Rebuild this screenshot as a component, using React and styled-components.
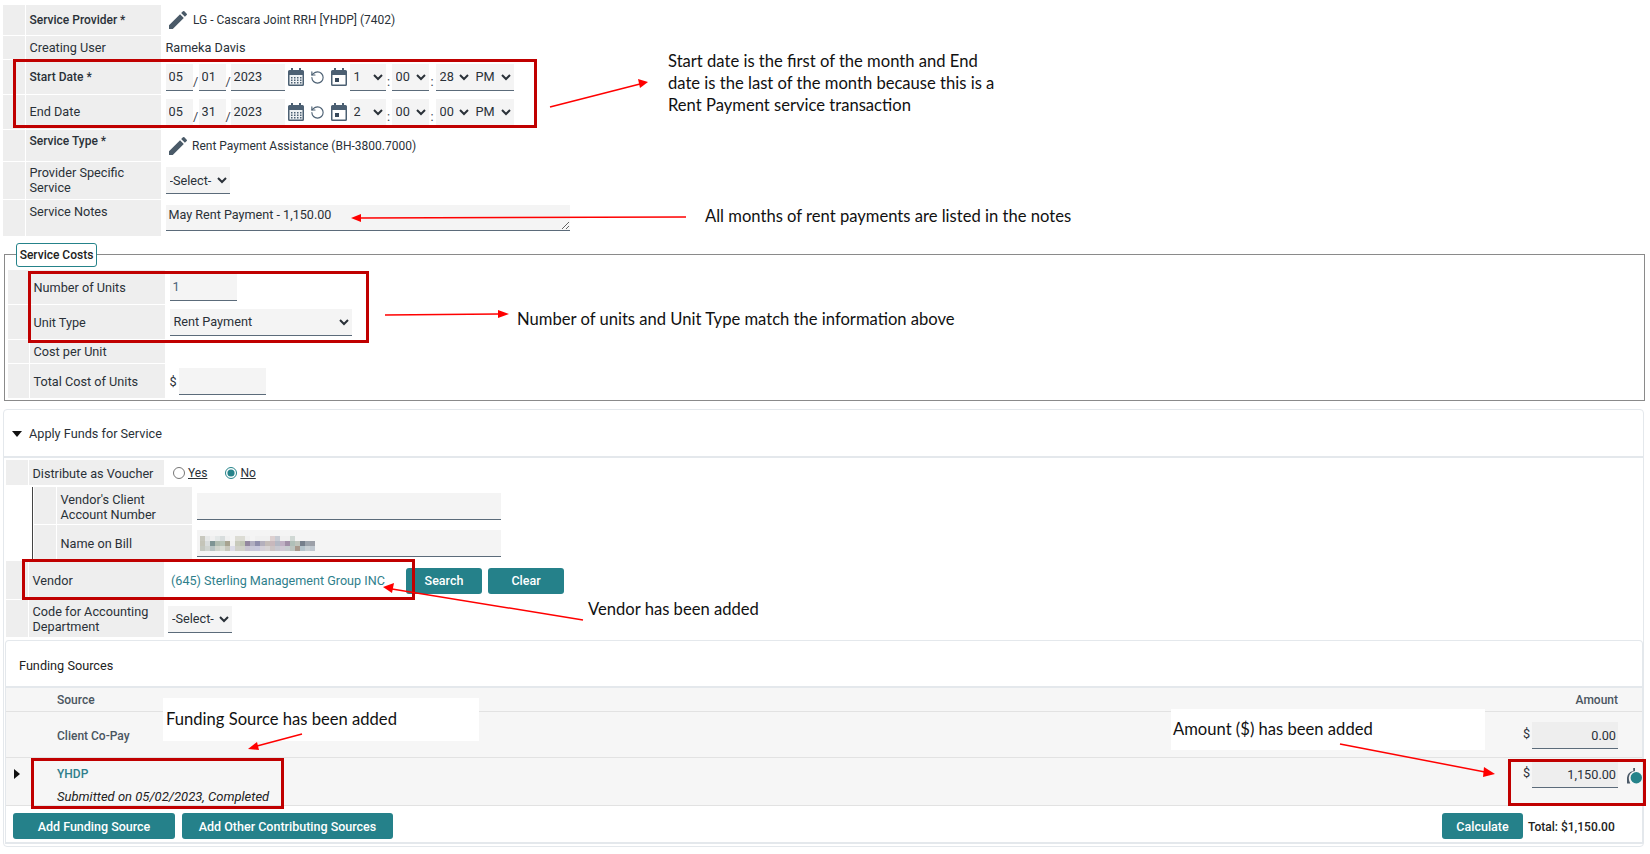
import React from "react";
import styled, { createGlobalStyle } from "styled-components";
import { RotateCcw } from "lucide-react";

const Global = createGlobalStyle`
  html, body { margin: 0; padding: 0; background: #fff; }
  body { font-family: Roboto, "Liberation Sans", sans-serif; font-size: 12.7px; color: #212b36; }
  * { box-sizing: border-box; }
`;

const Page = styled.div`
  position: relative;
  width: 1650px;
  height: 854px;
  overflow: hidden;
  padding-top: 5px;
`;

const TopForm = styled.div`
  display: flex;
  flex-direction: column;
  gap: 1px;
  margin-left: 3px;
`;

const Row = styled.div`
  display: grid;
  grid-template-columns: ${(p) => p.$indent || 22}px 135px 1fr;
  column-gap: 1px;
  height: ${(p) => p.$h}px;
`;

const Indent = styled.div`
  background: #eee;
`;

const Label = styled.div`
  background: #eee;
  padding: ${(p) => (p.$top ? `${p.$top}px` : "0")} 0 ${(p) => p.$lift || 0}px 3.5px;
  display: flex;
  align-items: ${(p) => (p.$top ? "flex-start" : "center")};
  line-height: 15px;
  font-size: ${(p) => (p.$bold ? 12 : 12.7)}px;
  font-weight: ${(p) => (p.$bold ? 500 : 400)};
  color: #2a3138;
`;

const Value = styled.div`
  display: flex;
  align-items: ${(p) => (p.$top ? "flex-start" : "center")};
  padding: ${(p) => p.$top || 0}px 0 0 ${(p) => p.$pad ?? 3.5}px;
  min-width: 0;
`;

const Field = styled.input`
  height: 27px;
  width: ${(p) => p.$w}px;
  flex: none;
  border: 0;
  border-bottom: 1px solid #5b6b7a;
  border-radius: 0;
  background: ${(p) => (p.$right ? "#eee" : "#f4f4f4")};
  padding: 0 ${(p) => (p.$right ? 2 : 3)}px 0 3px;
  font: 400 12.7px Roboto, sans-serif;
  color: ${(p) => p.$color || "#2a3138"};
  text-align: ${(p) => (p.$right ? "right" : "left")};
  outline: none;
`;

const Pick = styled.select`
  height: 27px;
  width: ${(p) => p.$w}px;
  flex: none;
  border: 0;
  border-bottom: 1px solid #5b6b7a;
  border-radius: 0;
  background-color: #f4f4f4;
  padding: 0;
  font: 400 12.7px Roboto, sans-serif;
  color: #2a3138;
  outline: none;
`;

const Notes = styled.textarea`
  width: 404px;
  height: 26px;
  margin-top: 4px;
  border: 0;
  border-bottom: 1px solid #5b6b7a;
  border-radius: 0;
  background: #f4f4f4;
  padding: 2px 3px;
  font: 400 12.6px/15px Roboto, sans-serif;
  color: #2a3138;
  outline: none;
  display: block;
`;

const Plain = styled.span`
  margin-left: ${(p) => p.$ml || 0}px;
  font-size: ${(p) => p.$size || 12.7}px;
  color: ${(p) => p.$color || "#2a3138"};
  white-space: nowrap;
`;

const Slash = styled.span`
  width: ${(p) => p.$w}px;
  flex: none;
  text-align: center;
  padding-top: 8px;
  color: #3c4650;
`;

const DateIcons = styled.span`
  display: inline-flex;
  align-items: center;
  flex: none;
  height: 27px;
  margin: 0 3px 0 3px;
  gap: 6px;
  color: #4c6073;
`;

const FieldSet = styled.div`
  position: relative;
  margin: 18px 0 0 4px;
  width: 1641px;
  height: 147px;
  border: 1px solid #8a8a8a;
  padding: 15px 0 0 3px;
  display: flex;
  flex-direction: column;
  gap: 1px;
`;

const Legend = styled.div`
  position: absolute;
  left: 11px;
  top: -12px;
  width: 81px;
  height: 24px;
  display: flex;
  align-items: center;
  justify-content: center;
  background: #fff;
  border: 1px solid #25838a;
  border-radius: 3px;
  font-size: 12px;
  font-weight: 500;
  color: #222;
`;

const Panel = styled.div`
  margin: 8px 0 0 3px;
  width: 1641px;
  height: 438px;
  border: 1px solid #e4e8ec;
  border-radius: 4px;
`;

const PanelHead = styled.div`
  height: 48px;
  display: flex;
  align-items: center;
  padding: 1px 0 0 8px;
  border-bottom: 2px solid #e4e8ec;
  gap: 7px;
  color: #2a3138;
`;

const DownCaret = styled.span`
  width: 0;
  height: 0;
  border-left: 5px solid transparent;
  border-right: 5px solid transparent;
  border-top: 6px solid #111;
`;

const PanelBody = styled.div`
  display: flex;
  flex-direction: column;
  gap: 1px;
  padding: 2px 0 0 2px;
  ${Label} { padding-top: 2px; }
  ${Value} { padding-top: 1px; }
`;

const RadioRow = styled.label`
  display: inline-flex;
  align-items: center;
  gap: 3px;
  margin-right: 18px;
  font-size: 12px;
  text-decoration: underline;
  color: #2a3138;
`;

const Radio = styled.input`
  width: 12px;
  height: 12px;
  margin: 0;
  accent-color: #25838a;
`;

const Nested = styled.div`
  margin: 1px 0 0 26px;
  border-left: 1px solid #444;
  padding-left: 1px;
  display: flex;
  flex-direction: column;
  gap: 1px;
`;

const MaskedField = styled.div`
  position: relative;
  width: 304px;
  height: 27px;
  background: #f4f4f4;
  border-bottom: 1px solid #5b6b7a;
`;

const Mosaic = styled.svg`
  position: absolute;
  left: 3px;
  top: 6px;
`;

const VendorLink = styled.a`
  color: #2f7f8c;
  font-size: 12.6px;
  width: 215px;
  margin-right: 20px;
  white-space: nowrap;
`;

const Btn = styled.button`
  height: 26px;
  width: ${(p) => p.$w}px;
  flex: none;
  margin-right: ${(p) => p.$mr || 0}px;
  margin-left: ${(p) => p.$ml || 0};
  border: 0;
  border-radius: 3px;
  background: #25818a;
  color: #fff;
  font: 500 12.5px Roboto, sans-serif;
  padding: 0;
`;

const Funding = styled.div`
  margin: 2px 0 0 -1px;
  height: 204px;
  border: 1px solid #e4e8ec;
  border-bottom-width: 2px;
  border-radius: 4px 4px 0 0;
`;

const FundingHead = styled.div`
  height: 47px;
  padding: 4px 0 0 13px;
  display: flex;
  align-items: center;
  border-bottom: 2px solid #e4e8ec;
  color: #222;
`;

const TableRow = styled.div`
  display: grid;
  grid-template-columns: 51px 1fr 120px;
  height: ${(p) => p.$h}px;
  background: #f6f6f6;
  border-bottom: 1px solid #e2e2e2;
`;

const Toggle = styled.div`
  padding: 11px 0 0 8px;
`;

const RightCaret = styled.span`
  display: block;
  width: 0;
  height: 0;
  border-top: 5px solid transparent;
  border-bottom: 5px solid transparent;
  border-left: 6px solid #111;
`;

const HeadText = styled.div`
  display: flex;
  align-items: center;
  justify-content: ${(p) => (p.$right ? "flex-end" : "flex-start")};
  padding-right: ${(p) => (p.$right ? 24 : 0)}px;
  font-size: 12px;
  font-weight: 500;
  color: #4a5560;
`;

const SourceName = styled.div`
  display: flex;
  align-items: center;
  padding-top: 2px;
  font-size: 12px;
  font-weight: 500;
  color: #4a5560;
`;

const SourceBlock = styled.div`
  padding-top: 9px;
  line-height: 14px;
`;

const SourceLink = styled.div`
  font-size: 12px;
  font-weight: 500;
  color: #2f7f8c;
`;

const Submitted = styled.div`
  margin-top: 9px;
  font-size: 13px;
  font-style: italic;
  color: #222;
`;

const AmountCell = styled.div`
  display: flex;
  align-items: flex-start;
  padding-top: ${(p) => p.$top}px;
`;

const Dollar = styled.span`
  width: 10px;
  flex: none;
  padding: 5px 0 0 1px;
  line-height: 14px;
  color: #2a3138;
`;

const Footer = styled.div`
  height: 38px;
  display: flex;
  align-items: flex-start;
  padding: 7px 30px 0 7px;
  gap: 7px;
`;

const Total = styled.span`
  width: 84px;
  margin-left: -2px;
  padding-top: 7px;
  font-size: 12px;
  font-weight: 500;
  color: #222;
  white-space: nowrap;
`;

const RedBox = styled.div`
  position: absolute;
  left: ${(p) => p.$x}px;
  top: ${(p) => p.$y}px;
  width: ${(p) => p.$w}px;
  height: ${(p) => p.$h}px;
  border: 3px solid #c00000;
`;

const Callout = styled.div`
  position: absolute;
  left: ${(p) => p.$x}px;
  top: ${(p) => p.$y}px;
  font: 400 16.6px/22px Lato, "Open Sans", sans-serif;
  color: #111;
  white-space: nowrap;
`;

const WhitePatch = styled.div`
  position: absolute;
  left: ${(p) => p.$x}px;
  top: ${(p) => p.$y}px;
  width: ${(p) => p.$w}px;
  height: ${(p) => p.$h}px;
  background: #fff;
`;

const ArrowLayer = styled.svg`
  position: absolute;
  left: 0;
  top: 0;
  pointer-events: none;
`;

const Pencil = () => (
  <svg width="24" height="24" viewBox="0 0 24 24" fill="#4a5a68" style={{ flex: "none" }}>
    <path d="M3 17.25V21h3.75L17.81 9.94l-3.75-3.75L3 17.25zM20.71 7.04a1 1 0 0 0 0-1.41l-2.34-2.34a1 1 0 0 0-1.41 0l-1.83 1.83 3.75 3.75 1.83-1.83z" />
  </svg>
);

const CalendarGrid = () => (
  <svg width="16" height="18" viewBox="0 0 16 18" style={{ flex: "none" }}>
    <path fill="#4c6073" d="M3 0h2v2h6V0h2v2h1.5A1.5 1.5 0 0 1 16 3.5v13a1.5 1.5 0 0 1-1.5 1.5h-13A1.5 1.5 0 0 1 0 16.5v-13A1.5 1.5 0 0 1 1.500 2H3z" />
    <rect x="1.500" y="7" width="13" height="9.500" fill="#eef1f3" />
    {[3, 6, 9, 12].map((x) =>
      [9, 11.5, 14].map((y) => <rect key={`${x}-${y}`} x={x} y={y} width="1.500" height="1.500" fill="#4c6073" />)
    )}
  </svg>
);

const CalendarDay = () => (
  <svg width="16" height="18" viewBox="0 0 16 18" style={{ flex: "none" }}>
    <path fill="#4c6073" d="M3 0h2v2h6V0h2v2h1.500A1.500 1.500 0 0 1 16 3.500v13a1.500 1.500 0 0 1-1.500 1.500h-13A1.500 1.500 0 0 1 0 16.500v-13A1.500 1.500 0 0 1 1.500 2H3z" />
    <rect x="1.500" y="7" width="13" height="9.500" fill="#fff" />
    <rect x="4" y="10" width="4" height="4" fill="#37485a" />
  </svg>
);

const DateTime = ({ m, d, y, hour, min, sec }) => (
  <>
    <Field $w={27} defaultValue={m} />
    <Slash $w={6}>/</Slash>
    <Field $w={27} defaultValue={d} />
    <Slash $w={5}>/</Slash>
    <Field $w={54} defaultValue={y} />
    <DateIcons>
      <CalendarGrid />
      <RotateCcw size={15} strokeWidth={1.8} />
      <CalendarDay />
    </DateIcons>
    <Pick $w={36} defaultValue={hour}><option>{hour}</option></Pick>
    <Slash $w={6}>:</Slash>
    <Pick $w={37} defaultValue={min}><option>{min}</option></Pick>
    <Slash $w={7}>:</Slash>
    <Pick $w={36} defaultValue={sec}><option>{sec}</option></Pick>
    <Pick $w={42} defaultValue="PM"><option>PM</option></Pick>
  </>
);

const mosaic = [
  ["c8c8be", "e6e8e8", "f0f0f0", "e4e8e8", "d8dddd", "f0f0f0", "f4f4f4", "dcdcd4", "dcdcd4", "f0f0f0", "f4f4f4", "f0f0f0", "f0f0f0", "f0f0f0", "ddd0d0", "c8ccd4", "f0f0f0", "f0f0f0", "d0d8d4", "f4f4f4", "f4f4f4", "f4f4f4", "f4f4f4"],
  ["c4c4b8", "d8dcdc", "7e9494", "b0bcb0", "b8c4b8", "a8a490", "f0f0f0", "c8cabc", "c0c4b4", "93879f", "b0aec0", "8f8eac", "b4b0bc", "c4bcb8", "c8b8bc", "b4b8c4", "c0b0c4", "a28fa8", "b0bfb8", "bfc4bc", "76808c", "9ca4ac", "9ca0a8"],
  ["c4c8c0", "d0d4d0", "b8c4c4", "d0d4cc", "d8dcd4", "c8c8bc", "dcdce8", "d0d0c8", "d0d0c8", "c8c4d0", "c8c8d8", "c8c8dc", "d4d0d8", "d8d4d4", "ccc4c4", "c8c8d0", "d0c8d4", "c8ccd0", "bcc4c0", "a8988c", "b4c4cc", "c8d0d4", "c0c8d0"],
];

const Blurred = () => (
  <Mosaic width="115" height="15" viewBox="0 0 115 15" shapeRendering="crispEdges">
    {mosaic.map((row, r) =>
      row.map((c, i) => <rect key={`${r}-${i}`} x={i * 5} y={r * 5} width="5" height="5" fill={`#${c}`} />)
    )}
  </Mosaic>
);

const arrows = [
  { d: "M550 107 L640 84", tip: "648,82 638,79 640,88" },
  { d: "M686 217 L360 218", tip: "351,218 361,214 361,222" },
  { d: "M385 315 L498 314", tip: "509,314 498,310 498,318" },
  { d: "M583 620 L392 589", tip: "383,587 394,583 392,593" },
  { d: "M302 734 L257 746", tip: "248,749 257,742 259,750" },
  { d: "M1340 744 L1485 772", tip: "1495,774 1484,767 1483,777" },
];

export default function App() {
  return (
    <Page>
      <Global />
      <TopForm>
        <Row $h={30}>
          <Indent />
          <Label $bold>Service Provider *</Label>
          <Value $pad={4}>
            <Pencil />
            <Plain $ml={3} $size={12}>LG - Cascara Joint RRH [YHDP] (7402)</Plain>
          </Value>
        </Row>
        <Row $h={23}>
          <Indent />
          <Label>Creating User</Label>
          <Value><Plain>Rameka Davis</Plain></Value>
        </Row>
        <Row $h={34}>
          <Indent />
          <Label $bold>Start Date *</Label>
          <Value><DateTime m="05" d="01" y="2023" hour="1" min="00" sec="28" /></Value>
        </Row>
        <Row $h={34}>
          <Indent />
          <Label $lift={2}>End Date</Label>
          <Value><DateTime m="05" d="31" y="2023" hour="2" min="00" sec="00" /></Value>
        </Row>
        <Row $h={31}>
          <Indent />
          <Label $bold $top={4}>Service Type *</Label>
          <Value $pad={4}>
            <Pencil />
            <Plain $ml={2} $size={12}>Rent Payment Assistance (BH-3800.7000)</Plain>
          </Value>
        </Row>
        <Row $h={37}>
          <Indent />
          <Label $lift={2}>Provider Specific<br />Service</Label>
          <Value><Pick $w={64} defaultValue="-Select-"><option>-Select-</option></Pick></Value>
        </Row>
        <Row $h={36}>
          <Indent />
          <Label $top={4}>Service Notes</Label>
          <Value $top={1}><Notes defaultValue="May Rent Payment - 1,150.00" /></Value>
        </Row>
      </TopForm>

      <FieldSet>
        <Legend>Service Costs</Legend>
        <Row $h={34} $indent={21}>
          <Indent />
          <Label>Number of Units</Label>
          <Value><Field $w={67} $color="#4a6378" defaultValue="1" /></Value>
        </Row>
        <Row $h={34} $indent={21}>
          <Indent />
          <Label>Unit Type</Label>
          <Value><Pick $w={182} defaultValue="Rent Payment"><option>Rent Payment</option></Pick></Value>
        </Row>
        <Row $h={23} $indent={21}>
          <Indent />
          <Label>Cost per Unit</Label>
          <Value />
        </Row>
        <Row $h={34} $indent={21}>
          <Indent />
          <Label>Total Cost of Units</Label>
          <Value>
            <Plain>$</Plain>
            <Field $w={87} style={{ marginLeft: 2 }} />
          </Value>
        </Row>
      </FieldSet>

      <Panel>
        <PanelHead>
          <DownCaret />
          Apply Funds for Service
        </PanelHead>
        <PanelBody>
          <Row $h={25}>
            <Indent />
            <Label>Distribute as Voucher</Label>
            <Value $pad={8}>
              <RadioRow><Radio type="radio" name="voucher" />Yes</RadioRow>
              <RadioRow><Radio type="radio" name="voucher" defaultChecked />No</RadioRow>
            </Value>
          </Row>
          <Nested>
            <Row $h={37}>
              <Indent />
              <Label>Vendor's Client<br />Account Number</Label>
              <Value><Field $w={304} /></Value>
            </Row>
            <Row $h={35}>
              <Indent />
              <Label>Name on Bill</Label>
              <Value>
                <MaskedField><Blurred /></MaskedField>
              </Value>
            </Row>
          </Nested>
          <Row $h={38}>
            <Indent />
            <Label $lift={2}>Vendor</Label>
            <Value $pad={6}>
              <VendorLink>(645) Sterling Management Group INC</VendorLink>
              <Btn $w={76} $mr={6}>Search</Btn>
              <Btn $w={76}>Clear</Btn>
            </Value>
          </Row>
          <Row $h={37}>
            <Indent />
            <Label $lift={2}>Code for Accounting<br />Department</Label>
            <Value $pad={3}><Pick $w={64} defaultValue="-Select-"><option>-Select-</option></Pick></Value>
          </Row>
          <Funding>
            <FundingHead>Funding Sources</FundingHead>
            <TableRow $h={24}>
              <div />
              <HeadText>Source</HeadText>
              <HeadText $right>Amount</HeadText>
            </TableRow>
            <TableRow $h={46}>
              <div />
              <SourceName>Client Co-Pay</SourceName>
              <AmountCell $top={10}>
                <Dollar>$</Dollar>
                <Field $w={86} $right defaultValue="0.00" />
              </AmountCell>
            </TableRow>
            <TableRow $h={48}>
              <Toggle><RightCaret /></Toggle>
              <SourceBlock>
                <SourceLink>YHDP</SourceLink>
                <Submitted>Submitted on 05/02/2023, Completed</Submitted>
              </SourceBlock>
              <AmountCell $top={3}>
                <Dollar>$</Dollar>
                <Field $w={86} $right defaultValue="1,150.00" />
                <svg width="15" height="17" viewBox="0 0 15 17" style={{ flex: "none", marginLeft: 9, marginTop: 7 }}>
                  <path d="M6.200 0h1.800v3.100A6.800 6.800 0 0 0 1.800 9.800c0 1.900.5 3.900 1.500 5.700H0V9.800a7 7 0 0 1 6.200-6.700z" fill="#4c5a68" />
                  <circle cx="9.300" cy="9.800" r="5.700" fill="#25838a" />
                </svg>
              </AmountCell>
            </TableRow>
            <Footer>
              <Btn $w={162}>Add Funding Source</Btn>
              <Btn $w={211}>Add Other Contributing Sources</Btn>
              <Btn $w={81} $ml="auto">Calculate</Btn>
              <Total>Total: $1,150.00</Total>
            </Footer>
          </Funding>
        </PanelBody>
      </Panel>

      <WhitePatch $x={163} $y={698} $w={316} $h={43} />
      <WhitePatch $x={1171} $y={709} $w={314} $h={41} />

      <RedBox $x={13} $y={59} $w={524} $h={69} />
      <RedBox $x={28} $y={271} $w={341} $h={72} />
      <RedBox $x={22} $y={559} $w={393} $h={41} />
      <RedBox $x={31} $y={758} $w={253} $h={51} />
      <RedBox $x={1508} $y={759} $w={138} $h={47} />

      <Callout $x={668} $y={50}>
        Start date is the first of the month and End<br />
        date is the last of the month because this is a<br />
        Rent Payment service transaction
      </Callout>
      <Callout $x={705} $y={205}>All months of rent payments are listed in the notes</Callout>
      <Callout $x={517} $y={308}>Number of units and Unit Type match the information above</Callout>
      <Callout $x={588} $y={598}>Vendor has been added</Callout>
      <Callout $x={166} $y={708}>Funding Source has been added</Callout>
      <Callout $x={1173} $y={718}>Amount ($) has been added</Callout>

      <ArrowLayer width="1650" height="854" viewBox="0 0 1650 854">
        {arrows.map((a) => (
          <g key={a.d}>
            <path d={a.d} stroke="#f00" strokeWidth="1.500" fill="none" />
            <polygon points={a.tip} fill="#f00" />
          </g>
        ))}
      </ArrowLayer>
    </Page>
  );
}
